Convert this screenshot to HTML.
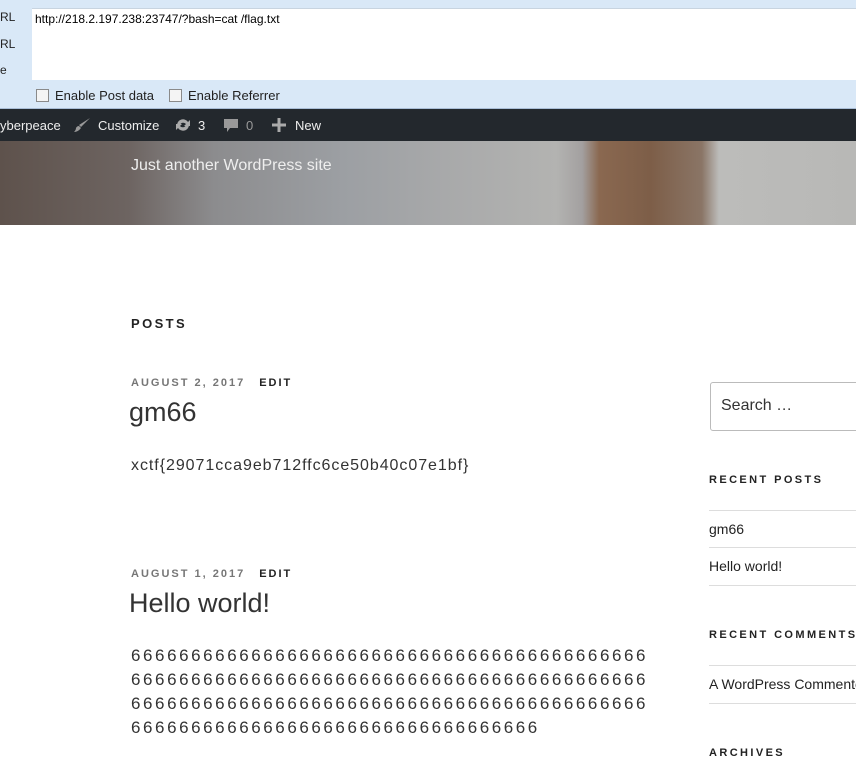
<!DOCTYPE html>
<html><head><meta charset="utf-8"><style>
*{margin:0;padding:0;box-sizing:border-box}
body{width:856px;height:775px;overflow:hidden;background:#fff;font-family:"Liberation Sans",sans-serif;position:relative}
.a{position:absolute;white-space:nowrap}
.top{position:absolute;left:0;top:0;width:856px;height:109px;background:#d9e8f7;border-bottom:1px solid #a9bdd6}
.ta{position:absolute;left:32px;top:8px;width:824px;height:72px;background:#fff;border-top:1px solid #c8d4e0}
.cb{position:absolute;width:13px;height:13px;border:1px solid #8a8a8a;background:#f4f4f4}
.bar{position:absolute;left:0;top:109px;width:856px;height:32px;background:#23282d;color:#eee;font-size:13px}
.hdr{position:absolute;left:0;top:141px;width:856px;height:84px;background:linear-gradient(90deg,#5e524c 0%,#6d6461 15%,#8c8c8e 25%,#9c9fa3 40%,#a8a9aa 52%,#b3b3b1 65%,#a3a0a0 68%,#8a6850 70%,#7d5e48 76%,#8a7566 82%,#bcbcba 84%,#b8b8b6 100%)}
.meta{font-size:11px;font-weight:bold;letter-spacing:2px;color:#767676}
.meta b{color:#222;margin-left:14px}
.wt{font-size:11px;font-weight:bold;letter-spacing:2.4px;color:#222}
.hr{position:absolute;left:709px;width:147px;height:1px;background:#ddd}
.six{font-size:17px;letter-spacing:2.57px;color:#333;line-height:24px}
</style></head><body>
<div class="top">
<div class="a" style="left:0;top:10px;font-size:12px;color:#222">RL</div>
<div class="a" style="left:0;top:37px;font-size:12px;color:#222">RL</div>
<div class="a" style="left:0;top:63px;font-size:12px;color:#222">e</div>
<div class="ta"><div class="a" style="left:3px;top:3px;font-size:12px;color:#000">http://218.2.197.238:23747/?bash=cat /flag.txt</div></div>
<div class="cb" style="left:36px;top:89px"></div>
<div class="a" style="left:55px;top:88px;font-size:13px;color:#222">Enable Post data</div>
<div class="cb" style="left:169px;top:89px"></div>
<div class="a" style="left:188px;top:88px;font-size:13px;color:#222">Enable Referrer</div>
</div>
<div class="hdr"></div>
<div class="a" style="left:131px;top:157px;font-size:16px;color:#eee">Just another WordPress site</div>
<div class="bar">
<div class="a" style="left:0;top:9px">yberpeace</div>
<svg class="a" style="left:73px;top:8px" width="18" height="16"><path d="M17 1 L8 10 L6 8 Z M6 9 L8 11 Q5 15 1 15 Q3 13 3 11 Q4 9 6 9Z" fill="#999"/></svg>
<div class="a" style="left:98px;top:9px">Customize</div>
<svg class="a" style="left:174px;top:8px" width="18" height="16"><path d="M3 8 A6 6 0 0 1 14 5 L16 3 L16 9 L10 9 L12 7 A3.5 3.5 0 0 0 6 8Z M15 8 A6 6 0 0 1 4 11 L2 13 L2 7 L8 7 L6 9 A3.5 3.5 0 0 0 12 8Z" fill="#aaa"/></svg>
<div class="a" style="left:198px;top:9px">3</div>
<svg class="a" style="left:222px;top:8px" width="18" height="18"><path d="M2 2 H16 V11 H8 L5 15 V11 H2Z" fill="#999"/></svg>
<div class="a" style="left:246px;top:9px;color:#999">0</div>
<svg class="a" style="left:272px;top:9px" width="14" height="14"><path d="M5.5 0H8.5V5.5H14V8.5H8.5V14H5.5V8.5H0V5.5H5.5Z" fill="#aaa"/></svg>
<div class="a" style="left:295px;top:9px">New</div>
</div>
<div class="a wt" style="left:131px;top:316px;font-size:13px;letter-spacing:2.4px">POSTS</div>
<div class="a meta" style="left:131px;top:377px">AUGUST 2, 2017<b>EDIT</b></div>
<div class="a" style="left:129px;top:397px;font-size:27px;color:#333">gm66</div>
<div class="a" style="left:131px;top:457px;font-size:16px;color:#333;letter-spacing:0.95px">xctf{29071cca9eb712ffc6ce50b40c07e1bf}</div>
<div class="a meta" style="left:131px;top:568px">AUGUST 1, 2017<b>EDIT</b></div>
<div class="a" style="left:129px;top:588px;font-size:27px;color:#333">Hello world!</div>
<div class="a six" style="left:131px;top:644px">6666666666666666666666666666666666666666666<br>6666666666666666666666666666666666666666666<br>6666666666666666666666666666666666666666666<br>6666666666666666666666666666666666</div>
<div class="a" style="left:710px;top:382px;width:160px;height:49px;border:1px solid #bbb;border-radius:3px"></div>
<div class="a" style="left:721px;top:397px;font-size:16px;color:#333">Search …</div>
<div class="a wt" style="left:709px;top:474px">RECENT POSTS</div>
<div class="hr" style="top:510px"></div>
<div class="a" style="left:709px;top:521px;font-size:14px;color:#222">gm66</div>
<div class="hr" style="top:547px"></div>
<div class="a" style="left:709px;top:558px;font-size:14px;color:#222">Hello world!</div>
<div class="hr" style="top:585px"></div>
<div class="a wt" style="left:709px;top:629px">RECENT COMMENTS</div>
<div class="hr" style="top:665px"></div>
<div class="a" style="left:709px;top:676px;font-size:14px;color:#222">A WordPress Commenter</div>
<div class="hr" style="top:703px"></div>
<div class="a wt" style="left:709px;top:747px">ARCHIVES</div>
</body></html>
